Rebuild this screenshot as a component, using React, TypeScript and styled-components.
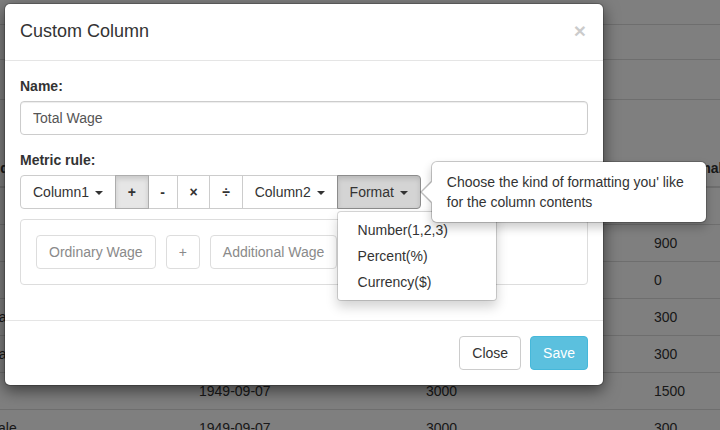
import React from "react";
import styled, { createGlobalStyle } from "styled-components";

const GlobalStyle = createGlobalStyle`
  html, body { margin: 0; padding: 0; background: #fff; }
  body {
    font-family: "Liberation Sans", Arial, Helvetica, sans-serif;
    font-size: 14px;
    line-height: 1.42857143;
    color: #333;
  }
  * { box-sizing: border-box; }
`;

/* ---------- background page (table behind the modal) ---------- */

const Page = styled.div`
  position: relative;
  width: 720px;
  height: 430px;
  overflow: hidden;
`;

const Sheet = styled.div`
  margin-left: -38px;
`;

const BandRow = styled.div<{ $h: number }>`
  height: ${(p) => p.$h}px;
  border-bottom: 1px solid #ddd;
`;

const TableRow = styled.div<{ $head?: boolean }>`
  display: grid;
  grid-template-columns: 229px 227px 228px 1fr;
  align-items: end;
  height: ${(p) => (p.$head ? "88px" : "37px")};
  border-bottom: ${(p) => (p.$head ? "2px" : "1px")} solid #ddd;
`;

const Cell = styled.div<{ $head?: boolean }>`
  padding: 8px;
  line-height: 20px;
  white-space: nowrap;
  overflow: hidden;
  font-weight: ${(p) => (p.$head ? 700 : 400)};
  color: #333;
`;

/* ---------- modal ---------- */

const Backdrop = styled.div`
  position: absolute;
  inset: 0;
  background: rgba(0, 0, 0, 0.5);
  padding: 3px 4px;
`;

const Dialog = styled.div`
  width: 600px;
  background: #fff;
  background-clip: padding-box;
  border: 1px solid rgba(0, 0, 0, 0.2);
  border-radius: 6px;
  box-shadow: 0 5px 15px rgba(0, 0, 0, 0.5);
`;

const Header = styled.div`
  display: flex;
  justify-content: space-between;
  align-items: flex-start;
  padding: 15px;
  border-bottom: 1px solid #e5e5e5;
`;

const Title = styled.h4`
  margin: 0;
  font-size: 18px;
  font-weight: 500;
  line-height: 1.42857143;
`;

const CloseX = styled.span`
  margin-top: 1px;
  margin-right: 2px;
  font-size: 21px;
  font-weight: 700;
  line-height: 1;
  color: #000;
  opacity: 0.2;
`;

const Body = styled.div`
  padding: 15px;
`;

const FormGroup = styled.div`
  margin-bottom: 15px;
`;

const Label = styled.label`
  display: block;
  margin-bottom: 5px;
  font-weight: 700;
`;

const Input = styled.input`
  display: block;
  width: 100%;
  height: 34px;
  padding: 6px 12px;
  font: inherit;
  font-size: 14px;
  line-height: 20px;
  color: #555;
  background: #fff;
  border: 1px solid #ccc;
  border-radius: 4px;
  box-shadow: inset 0 1px 1px rgba(0, 0, 0, 0.075);
  outline: none;
`;

const BtnGroup = styled.div`
  display: inline-flex;
  position: relative;
`;

const Btn = styled.button<{
  $state?: "active" | "open";
  $op?: boolean;
  $first?: boolean;
  $last?: boolean;
}>`
  position: relative;
  height: 34px;
  margin: 0 0 0 ${(p) => (p.$first ? "0" : "-1px")};
  padding: 6px ${(p) => (p.$op ? "11.75px" : "12px")};
  font-family: inherit;
  font-size: 14px;
  line-height: 20px;
  font-weight: ${(p) => (p.$op ? 700 : 400)};
  color: #333;
  white-space: nowrap;
  background: ${(p) =>
    p.$state === "open" ? "#d4d4d4" : p.$state === "active" ? "#e6e6e6" : "#fff"};
  border: 1px solid
    ${(p) => (p.$state === "open" ? "#8c8c8c" : p.$state === "active" ? "#adadad" : "#ccc")};
  box-shadow: ${(p) => (p.$state ? "inset 0 3px 5px rgba(0,0,0,.125)" : "none")};
  border-radius: ${(p) => (p.$first ? "4px 0 0 4px" : p.$last ? "0 4px 4px 0" : "0")};
  z-index: ${(p) => (p.$state ? 1 : 0)};
`;

const Caret = styled.span`
  display: inline-block;
  width: 0;
  height: 0;
  margin-left: 2px;
  vertical-align: middle;
  border-top: 4px solid;
  border-right: 4px solid transparent;
  border-left: 4px solid transparent;
`;

const DropWrap = styled.div`
  position: relative;
  display: inline-flex;
`;

const Menu = styled.ul`
  position: absolute;
  top: 100%;
  left: -1px;
  z-index: 3;
  min-width: 160px;
  margin: 2px 0 0;
  padding: 5px 0;
  list-style: none;
  background: #fff;
  background-clip: padding-box;
  border: 1px solid rgba(0, 0, 0, 0.15);
  border-radius: 4px;
  box-shadow: 0 6px 12px rgba(0, 0, 0, 0.175);
`;

const MenuItem = styled.li`
  padding: 3px 20px;
  line-height: 20px;
  color: #333;
  white-space: nowrap;
`;

const Popover = styled.div`
  position: absolute;
  left: calc(100% + 10px);
  top: 50%;
  transform: translateY(-50%);
  z-index: 4;
  width: 276px;
  padding: 1px;
  background: #fff;
  background-clip: padding-box;
  border: 1px solid rgba(0, 0, 0, 0.2);
  border-radius: 6px;
  box-shadow: 0 5px 10px rgba(0, 0, 0, 0.2);

  &::before,
  &::after {
    content: "";
    position: absolute;
    top: 50%;
    width: 0;
    height: 0;
    border-style: solid;
  }
  &::before {
    left: -12px;
    margin-top: -11px;
    border-width: 11px 11px 11px 0;
    border-color: transparent rgba(0, 0, 0, 0.25) transparent transparent;
  }
  &::after {
    left: -10px;
    margin-top: -10px;
    border-width: 10px 10px 10px 0;
    border-color: transparent #fff transparent transparent;
  }
`;

const PopoverContent = styled.div`
  padding: 9px 14px;
  line-height: 20px;
`;

const Formula = styled.div`
  display: flex;
  gap: 10px;
  margin: 10px 0 20px;
  padding: 15px;
  border: 1px solid #ddd;
  border-radius: 4px;
`;

const Chip = styled.span`
  display: inline-block;
  padding: 6px 12px;
  line-height: 20px;
  color: #8a8a8a;
  border: 1px solid #ddd;
  border-radius: 4px;
  white-space: nowrap;
`;

const Footer = styled.div`
  display: flex;
  justify-content: flex-end;
  gap: 9px;
  padding: 15px;
  border-top: 1px solid #e5e5e5;
`;

const FooterBtn = styled.button<{ $info?: boolean }>`
  height: 34px;
  margin: 0;
  padding: 6px 12px;
  font-family: inherit;
  font-size: 14px;
  line-height: 20px;
  color: ${(p) => (p.$info ? "#fff" : "#333")};
  background: ${(p) => (p.$info ? "#5bc0de" : "#fff")};
  border: 1px solid ${(p) => (p.$info ? "#46b8da" : "#ccc")};
  border-radius: 4px;
`;

type RowData = [string, string, string, string];

const rows: RowData[] = [
  ["", "1949-09-07", "3000", "600"],
  ["", "1949-09-07", "3000", "900"],
  ["", "1949-09-07", "3000", "0"],
  ["Diana", "1949-09-07", "3000", "300"],
  ["Diana", "1949-09-07", "3000", "300"],
  ["", "1949-09-07", "3000", "1500"],
  ["Female", "1949-09-07", "3000", "300"],
];

export default function App() {
  return (
    <Page>
      <GlobalStyle />
      <Sheet>
        <BandRow $h={25} />
        <BandRow $h={35} />
        <BandRow $h={40} />
        <TableRow $head>
          <Cell $head>Stand</Cell>
          <Cell $head>Hire Date</Cell>
          <Cell $head>Ordinary Wage</Cell>
          <Cell $head>Additional</Cell>
        </TableRow>
        {rows.map((r, i) => (
          <TableRow key={i}>
            {r.map((t, j) => (
              <Cell key={j}>{t}</Cell>
            ))}
          </TableRow>
        ))}
      </Sheet>

      <Backdrop>
        <Dialog>
          <Header>
            <Title>Custom Column</Title>
            <CloseX>×</CloseX>
          </Header>
          <Body>
            <FormGroup>
              <Label>Name:</Label>
              <Input defaultValue="Total Wage" />
            </FormGroup>
            <Label>Metric rule:</Label>
            <BtnGroup>
              <Btn $first>
                Column1 <Caret />
              </Btn>
              <Btn $op $state="active">+</Btn>
              <Btn $op>-</Btn>
              <Btn $op>×</Btn>
              <Btn $op>÷</Btn>
              <Btn>
                Column2 <Caret />
              </Btn>
              <DropWrap>
                <Btn $last $state="open">
                  Format <Caret />
                </Btn>
                <Menu>
                  <MenuItem>Number(1,2,3)</MenuItem>
                  <MenuItem>Percent(%)</MenuItem>
                  <MenuItem>Currency($)</MenuItem>
                </Menu>
                <Popover>
                  <PopoverContent>
                    Choose the kind of formatting you' like for the column contents
                  </PopoverContent>
                </Popover>
              </DropWrap>
            </BtnGroup>
            <Formula>
              <Chip>Ordinary Wage</Chip>
              <Chip>+</Chip>
              <Chip>Additional Wage</Chip>
            </Formula>
          </Body>
          <Footer>
            <FooterBtn>Close</FooterBtn>
            <FooterBtn $info>Save</FooterBtn>
          </Footer>
        </Dialog>
      </Backdrop>
    </Page>
  );
}
